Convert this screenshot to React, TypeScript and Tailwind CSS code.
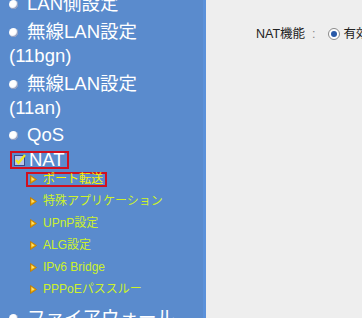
import React from 'react';

const font = { fontFamily: '"Liberation Sans", "Noto Sans CJK JP", sans-serif' };

const Bullet = () => (
    <span className="inline-block w-[9px] h-[9px] rounded-full bg-white shadow-[inset_-1px_-1px_1px_rgba(60,80,140,0.6)] mr-[9px] shrink-0" />
);

const Arrow = () => (
    <svg width="7" height="9" viewBox="0 0 7 9" className="mr-[6px] shrink-0">
        <path d="M0.5 0.5 L6.5 4.5 L0.5 8.5 Z" fill="#e8a800" stroke="#c07800" strokeWidth="0.8" />
        <path d="M1.5 2 L4.5 4.5 L1.5 6" fill="#ffe070" />
    </svg>
);

const Check = () => (
    <svg width="12" height="12" viewBox="0 0 12 12" className="mr-[3px] shrink-0">
        <rect x="0.5" y="1.5" width="10" height="10" fill="#b8c4e8" stroke="#3a4a8a" />
        <path d="M2 6 L4.5 9 L11 1" fill="none" stroke="#f0e820" strokeWidth="2.2" />
    </svg>
);

const subItems = ['特殊アプリケーション', 'UPnP設定', 'ALG設定', 'IPv6 Bridge', 'PPPoEパススルー'];

export default function App() {
    return (
        <div className="flex w-[362px] h-[318px] overflow-hidden bg-[#eeeeee]" style={font}>
            {/* Sidebar menu */}
            <div className="w-[206px] shrink-0 bg-[#5a8bcd] border-r-[3px] border-[#5b91da] text-white">
                <ul className="-mt-[8px] pl-[9px] flex flex-col gap-[4px] text-[18.5px] leading-[24px]">
                    <li className="flex items-center">
                        <Bullet />
                        LAN側設定
                    </li>
                    <li>
                        <div className="flex items-center">
                            <Bullet />
                            無線LAN設定
                        </div>
                        <div>(11bgn)</div>
                    </li>
                    <li>
                        <div className="flex items-center">
                            <Bullet />
                            無線LAN設定
                        </div>
                        <div>(11an)</div>
                    </li>
                    <li className="flex items-center -mt-[1px]">
                        <Bullet />
                        QoS
                    </li>
                    <li>
                        <div className="flex">
                            <div className="flex items-center h-[18px] border-2 border-[#d01020] px-[2px] ml-[1px]">
                                <Check />
                                NAT
                            </div>
                        </div>
                        <ul className="-mt-[1px] text-[12px] text-[#ccf22a]">
                            <li className="flex items-center h-[22px]">
                                <span className="inline-flex items-center h-[15px] border-2 border-[#d01020] ml-[17px] px-[2px] text-[#f5f500]">
                                    <Arrow />
                                    ポート転送
                                </span>
                            </li>
                            {subItems.map((s) => (
                                <li key={s} className="flex items-center h-[22px] pl-[21px]">
                                    <Arrow />
                                    {s}
                                </li>
                            ))}
                        </ul>
                    </li>
                    <li className="flex items-center mt-[2px]">
                        <Bullet />
                        ファイアウォール
                    </li>
                </ul>
            </div>

            {/* Content */}
            <div className="flex-1 pt-[25px] pl-[50px] text-[12.5px] text-[#222]">
                <div className="flex items-center whitespace-nowrap">
                    <span>NAT機能</span>
                    <span className="ml-[7px] text-[#888]">:</span>
                    <span className="ml-[12px] w-[12px] h-[12px] rounded-full border border-[#8a8a8a] bg-white flex items-center justify-center shrink-0">
                        <span className="w-[6px] h-[6px] rounded-full bg-[#2a5aa8]" />
                    </span>
                    <span className="ml-[4px]">有効</span>
                </div>
            </div>
        </div>
    );
}
